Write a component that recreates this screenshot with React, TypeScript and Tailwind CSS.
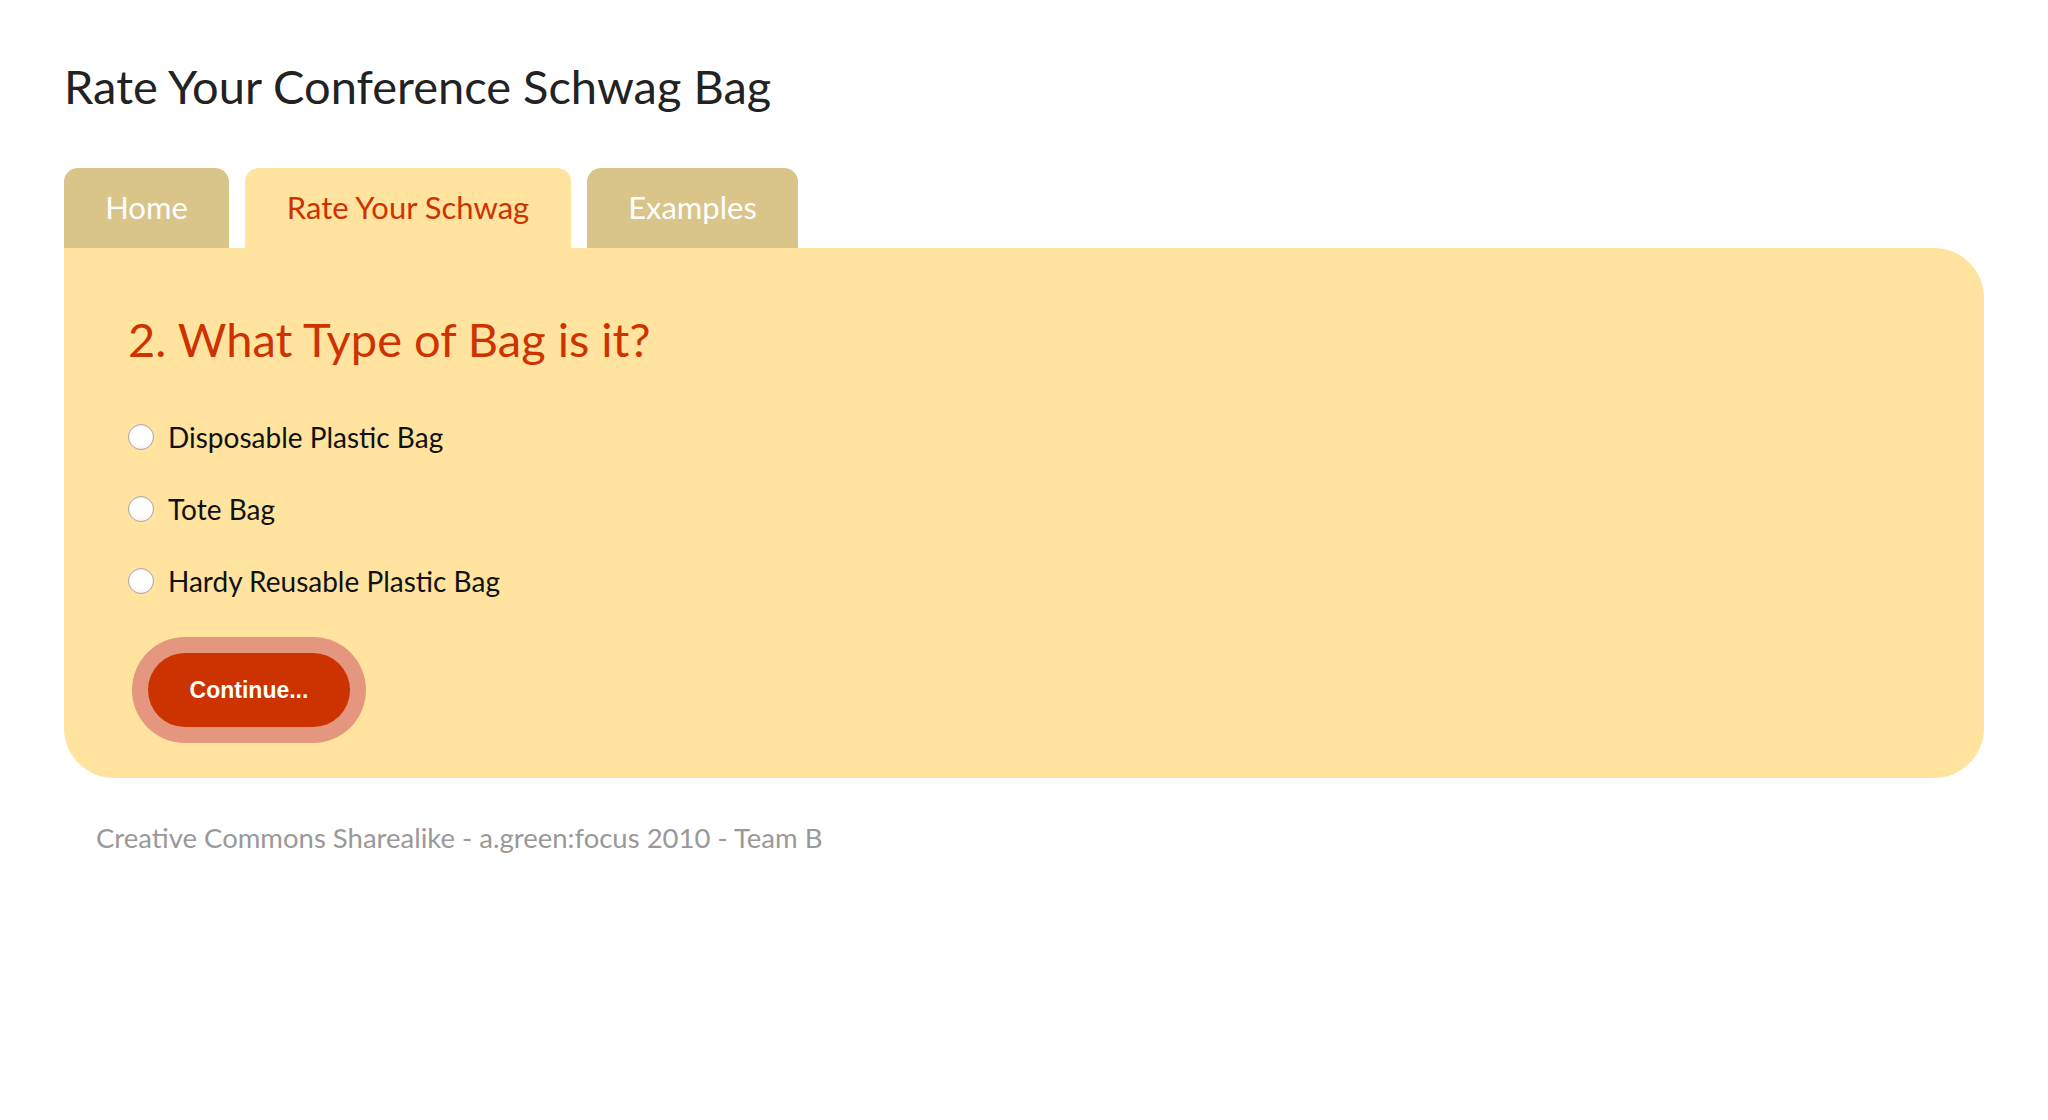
import React from "react";

const font = { fontFamily: "Lato, 'Open Sans', sans-serif" };

function Radio() {
  return (
    <span className="inline-block w-[26px] h-[26px] rounded-full border border-[#a9a9a9] bg-[radial-gradient(circle_at_50%_35%,#ffffff_55%,#e6e6e6_100%)] shadow-[inset_0_1px_1px_rgba(0,0,0,0.08)] shrink-0" />
  );
}

export default function App() {
  const options = ["Disposable Plastic Bag", "Tote Bag", "Hardy Reusable Plastic Bag"];
  return (
    <div className="min-h-[1120px] bg-white pl-[64px] pr-[64px]" style={font}>
      <h1 className="pt-[58px] text-[47px] leading-[56px] text-[#222222] font-normal">
        Rate Your Conference Schwag Bag
      </h1>

      <div className="mt-[54px] flex items-end gap-[16px] h-[80px]">
        <div className="w-[165px] h-[80px] rounded-t-[14px] bg-[#d9c48a] text-white text-[31px] leading-[36px] flex justify-center pt-[21px]">
          Home
        </div>
        <div className="w-[326px] h-[80px] rounded-t-[14px] bg-[#ffe39f] text-[#cc3300] text-[31px] leading-[36px] flex justify-center pt-[21px]">
          Rate Your Schwag
        </div>
        <div className="w-[211px] h-[80px] rounded-t-[14px] bg-[#d9c48a] text-white text-[31px] leading-[36px] flex justify-center pt-[21px]">
          Examples
        </div>
      </div>

      <div className="bg-[#ffe39f] rounded-[50px] rounded-tl-none h-[530px] pl-[64px] pt-[62px]">
        <h2 className="text-[47px] leading-[58px] text-[#cc3300] font-normal">
          2. What Type of Bag is it?
        </h2>
        <div className="mt-[53px] flex flex-col gap-[40px]">
          {options.map((o) => (
            <label key={o} className="flex items-center gap-[14px] h-[32px] text-[28px] leading-[32px] text-[#111111]">
              <Radio />
              <span>{o}</span>
            </label>
          ))}
        </div>
        <div className="mt-[40px] ml-[4px]">
          <span className="inline-flex p-[16px] rounded-full bg-[#e4967f]">
            <button
              className="w-[202px] h-[74px] rounded-full bg-[#cc3300] text-white text-[23px] font-bold"
              style={{ fontFamily: "'Liberation Sans', Arial, sans-serif" }}
            >
              Continue...
            </button>
          </span>
        </div>
      </div>

      <p className="ml-[32px] mt-[44px] text-[27.5px] leading-[32px] text-[#999999]">
        Creative Commons Sharealike - a.green:focus 2010 - Team B
      </p>
    </div>
  );
}
